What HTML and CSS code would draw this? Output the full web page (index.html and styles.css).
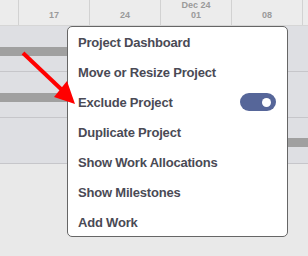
FILE: index.html
```html
<!DOCTYPE html>
<html lang="en">
<head>
  <meta charset="UTF-8">
  <title>Timeline</title>
  <link rel="stylesheet" href="styles.css">
</head>
<body>
<div id="app">
  <div class="timeHeader">
    <div class="cell first"></div>
    <div class="cell"><span>17</span></div>
    <div class="cell"><span>24</span></div>
    <div class="cell"><span>Dec 24</span><span>01</span></div>
    <div class="cell"><span>08</span></div>
    <div class="cell last"></div>
  </div>

  <div class="rows">
    <div class="row"><div class="bar barLeft"></div></div>
    <div class="row"><div class="bar barLeft"></div></div>
    <div class="row"><div class="bar barRight"></div></div>
  </div>

  <div id="menu">
    <div class="item">Project Dashboard</div>
    <div class="item">Move or Resize Project</div>
    <div class="item">Exclude Project <span class="toggle"><span class="knob"></span></span></div>
    <div class="item">Duplicate Project</div>
    <div class="item">Show Work Allocations</div>
    <div class="item">Show Milestones</div>
    <div class="item">Add Work</div>
  </div>

  <svg class="arrow" width="308" height="256" viewBox="0 0 308 256">
    <line x1="23" y1="53" x2="62" y2="90" stroke="#ff0000" stroke-width="4"/>
    <polygon points="67,81 54,97 75,104" fill="#ff0000"/>
  </svg>
</div>
</body>
</html>
```

FILE: styles.css
```css
html, body {
  margin: 0;
  height: 100%;
}

#app {
  position: relative;
  width: 308px;
  height: 256px;
  overflow: hidden;
  background-color: #e9e9e9;
  font-family: "Liberation Sans", Arial, sans-serif;
}

.timeHeader {
  display: flex;
  height: 26px;
  box-sizing: border-box;
  border-bottom: 1px solid #d6d6d6;
  background-color: #ececec;
}

.timeHeader .cell {
  width: 71px;
  border-right: 1px solid #d2d2d2;
  display: flex;
  flex-direction: column;
  justify-content: flex-end;
  align-items: center;
  padding-bottom: 5px;
  box-sizing: border-box;
  font-size: 9px;
  line-height: 10px;
  font-weight: bold;
  color: #9a9a9a;
}

.timeHeader .first {
  width: 19px;
}

.timeHeader .last {
  flex: 1;
  border-right: none;
}

.rows {
  background-color: #dedfe3;
}

.row {
  height: 45px;
  border-bottom: 1px solid #c6c6ca;
  overflow: hidden;
}

.bar {
  height: 9px;
  margin-top: 21px;
  background-color: #a0a0a0;
}

.barLeft {
  width: 200px;
}

.barRight {
  margin-top: 20px;
  margin-left: 160px;
}

#menu {
  position: absolute;
  left: 67px;
  top: 26px;
  width: 221px;
  height: 211px;
  box-sizing: border-box;
  background-color: #ffffff;
  border: 1px solid #666666;
  border-radius: 5px;
}

#menu .item {
  display: flex;
  align-items: center;
  justify-content: space-between;
  height: 30px;
  padding: 0 11px 0 10px;
  font-size: 13px;
  font-weight: bold;
  letter-spacing: -0.2px;
  color: #4a4a55;
}

.toggle {
  display: flex;
  align-items: center;
  justify-content: flex-end;
  width: 36px;
  height: 18px;
  padding-right: 5px;
  box-sizing: border-box;
  border-radius: 9px;
  background-color: #566699;
}

.knob {
  width: 9px;
  height: 9px;
  border-radius: 50%;
  background-color: #ffffff;
}

.arrow {
  position: absolute;
  left: 0;
  top: 0;
}
```
